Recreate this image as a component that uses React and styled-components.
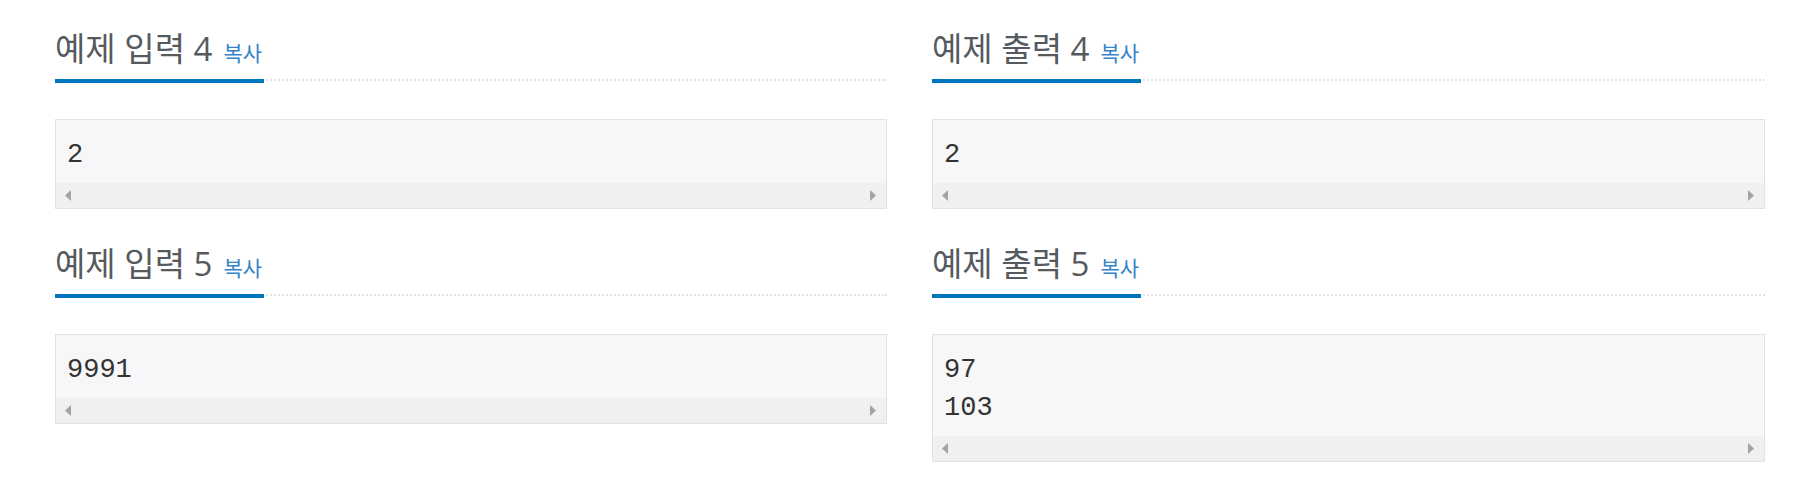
import React from 'react'
import styled, { createGlobalStyle } from 'styled-components'

const GlobalStyle = createGlobalStyle`
  body {
    margin: 0;
    background: #fff;
    font-family: "Open Sans", "Noto Sans CJK KR", sans-serif;
  }
`

const samples = [
  { title: '예제 입력 4', lines: ['2'] },
  { title: '예제 출력 4', lines: ['2'] },
  { title: '예제 입력 5', lines: ['9991'] },
  { title: '예제 출력 5', lines: ['97', '103'] },
]

export default function App() {
  return (
    <>
      <GlobalStyle />
      <Page>
        {samples.map((s) => (
          <Section key={s.title}>
            <Headline>
              <Title>
                {s.title}
                <CopyButton type="button">복사</CopyButton>
              </Title>
            </Headline>
            <SampleBox>
              <Pre>{s.lines.join('\n')}</Pre>
              <ScrollTrack>
                <Arrow viewBox="0 0 6 11">
                  <polygon points="6,0 0,5.5 6,11" />
                </Arrow>
                <Arrow viewBox="0 0 6 11">
                  <polygon points="0,0 6,5.5 0,11" />
                </Arrow>
              </ScrollTrack>
            </SampleBox>
          </Section>
        ))}
      </Page>
    </>
  )
}

const Page = styled.div`
  display: grid;
  grid-template-columns: 832px 833px;
  column-gap: 45px;
  row-gap: 32px;
  align-items: start;
  padding: 26px 0 0 55px;
`

const Section = styled.section`
  display: flex;
  flex-direction: column;
`

const Headline = styled.div`
  display: flex;
  border-bottom: 2px dotted #dfe3e8;
`

const Title = styled.h2`
  margin: 0 0 -4px;
  padding: 0 2px 8px 0;
  border-bottom: 4px solid #0076c0;
  font-size: 33px;
  line-height: 45px;
  font-weight: 400;
  color: #555a60;
  font-family: "Open Sans", "Noto Sans CJK KR", sans-serif;
`

const CopyButton = styled.button`
  border: 0;
  background: none;
  padding: 0;
  margin-left: 11px;
  font-family: "Noto Sans CJK KR", sans-serif;
  font-size: 21px;
  color: #3583c8;
  cursor: pointer;
`

const SampleBox = styled.div`
  margin-top: 38px;
  border: 1px solid #e1e1e8;
  background: #f7f7f9;
`

const Pre = styled.pre`
  margin: 0;
  padding: 16px 11px 9px;
  font-family: "Liberation Mono", monospace;
  font-size: 27px;
  line-height: 38px;
  color: #333;
`

const ScrollTrack = styled.div`
  display: flex;
  justify-content: space-between;
  align-items: center;
  height: 25px;
  padding: 0 10px 0 9px;
  background: #f0f0f0;
`

const Arrow = styled.svg`
  width: 6px;
  height: 11px;
  fill: #a3a3a3;
`
